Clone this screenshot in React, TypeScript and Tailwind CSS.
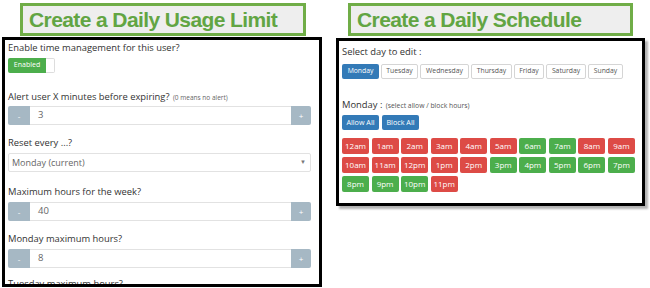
import React from "react";

const font = { fontFamily: '"Open Sans", "Noto Sans", sans-serif' };

const Title = ({ text, className }: { text: string; className: string }) => (
  <div
    className={`h-[33px] border-[3px] border-[#70ad47] bg-[#eeeeee] pl-[6px] flex items-center text-[21px] font-bold tracking-[-0.6px] text-[#62a543] ${className}`}
    style={{ fontFamily: '"Liberation Sans", Arial, sans-serif' }}
  >
    {text}
  </div>
);

const Label = ({ children, className = "" }: { children: React.ReactNode; className?: string }) => (
  <div className={`h-[14px] leading-[14px] text-[9.4px] text-[#333] whitespace-nowrap ${className}`}>{children}</div>
);

const Spinner = ({ value, className = "" }: { value: string; className?: string }) => (
  <div className={`flex h-[19px] w-[303px] ${className}`}>
    <div className="w-[22px] bg-[#a6b8c4] rounded-l-[2px] flex items-center justify-center text-white text-[8px]">-</div>
    <div className="flex-1 border-y border-[#e2e2e2] bg-white flex items-center pl-[8px] text-[9.5px] text-[#666]">{value}</div>
    <div className="w-[20px] bg-[#a6b8c4] rounded-r-[2px] flex items-center justify-center text-white text-[8px]">+</div>
  </div>
);

const days = [
  { name: "Monday", w: "w-[37px]" },
  { name: "Tuesday", w: "w-[37px]" },
  { name: "Wednesday", w: "w-[49px]" },
  { name: "Thursday", w: "w-[41px]" },
  { name: "Friday", w: "w-[30px]" },
  { name: "Saturday", w: "w-[40px]" },
  { name: "Sunday", w: "w-[35px]" },
];

const hours: [string, boolean][] = [
  ["12am", false], ["1am", false], ["2am", false], ["3am", false], ["4am", false],
  ["5am", false], ["6am", true], ["7am", true], ["8am", false], ["9am", false],
  ["10am", false], ["11am", false], ["12pm", false], ["1pm", false], ["2pm", false],
  ["3pm", true], ["4pm", true], ["5pm", true], ["6pm", true], ["7pm", true],
  ["8pm", true], ["9pm", true], ["10pm", true], ["11pm", false],
];

export default function App() {
  return (
    <div className="flex w-[650px] h-[288px] overflow-hidden bg-white" style={font}>
      {/* Daily usage limit */}
      <div className="ml-[2px] w-[320px] flex flex-col">
        <Title text="Create a Daily Usage Limit" className="ml-[18px] mt-[3px] w-[286px]" />
        <div className="mt-[1px] h-[250px] border-[3px] border-black overflow-hidden pl-[3px] pt-[1px]">
          <Label>Enable time management for this user?</Label>
          <div className="mt-[3px] flex h-[15px] w-[47px]">
            <div className="w-[38px] bg-[#4cae4c] rounded-l-[2px] flex items-center justify-center text-white text-[7px]">Enabled</div>
            <div className="flex-1 border border-l-0 border-[#ddd] rounded-r-[2px] bg-white" />
          </div>
          <Label className="mt-[17px]">
            Alert user X minutes before expiring?{" "}
            <span className="text-[6.5px] text-[#666] ml-[1px]">(0 means no alert)</span>
          </Label>
          <Spinner value="3" className="mt-[2px]" />
          <Label className="mt-[11px]">Reset every ...?</Label>
          <div className="mt-[3px] h-[19px] w-[303px] border border-[#e2e2e2] rounded-[2px] flex items-center justify-between pl-[3px] pr-[4px] text-[9px] text-[#666]">
            <span>Monday (current)</span>
            <span className="text-[6px] text-[#777]">▼</span>
          </div>
          <Label className="mt-[13px]">Maximum hours for the week?</Label>
          <Spinner value="40" className="mt-[3px]" />
          <Label className="mt-[11px]">Monday maximum hours?</Label>
          <Spinner value="8" className="mt-[3px]" />
          <Label className="mt-[9px]">Tuesday maximum hours?</Label>
        </div>
      </div>

      {/* Daily schedule */}
      <div className="ml-[14px] w-[309px] flex flex-col">
        <Title text="Create a Daily Schedule" className="ml-[12px] mt-[3px] w-[285px]" />
        <div className="mt-[2px] h-[168px] border-[3px] border-black shadow-[3px_3px_2px_rgba(0,0,0,0.3)] pl-[3px] pt-[4px]">
          <Label className="text-[8.6px]">Select day to edit :</Label>
          <div className="mt-[5px] flex gap-[2px]">
            {days.map((d, i) => (
              <div
                key={d.name}
                className={`${d.w} h-[15px] rounded-[2px] flex items-center justify-center text-[6.8px] ${
                  i === 0 ? "bg-[#337ab7] text-white" : "border border-[#d5d5d5] text-[#555] bg-white"
                }`}
              >
                {d.name}
              </div>
            ))}
          </div>
          <Label className="mt-[19px] text-[8.8px]">
            Monday :{" "}
            <span className="text-[6.8px] text-[#555] ml-[1px]">(select allow / block hours)</span>
          </Label>
          <div className="mt-[3px] flex gap-[3px]">
            <div className="w-[37px] h-[15px] bg-[#337ab7] rounded-[2px] flex items-center justify-center text-white text-[7.2px]">Allow All</div>
            <div className="w-[37px] h-[15px] bg-[#337ab7] rounded-[2px] flex items-center justify-center text-white text-[7.2px]">Block All</div>
          </div>
          <div className="mt-[8px] w-[293px] grid grid-cols-10 gap-x-[2.5px] gap-y-[3px]">
            {hours.map(([h, allow]) => (
              <div
                key={h}
                className={`h-[16px] rounded-[2px] flex items-center justify-center text-white text-[8px] ${
                  allow ? "bg-[#4cae4c]" : "bg-[#dd4b46]"
                }`}
              >
                {h}
              </div>
            ))}
          </div>
        </div>
      </div>
    </div>
  );
}
